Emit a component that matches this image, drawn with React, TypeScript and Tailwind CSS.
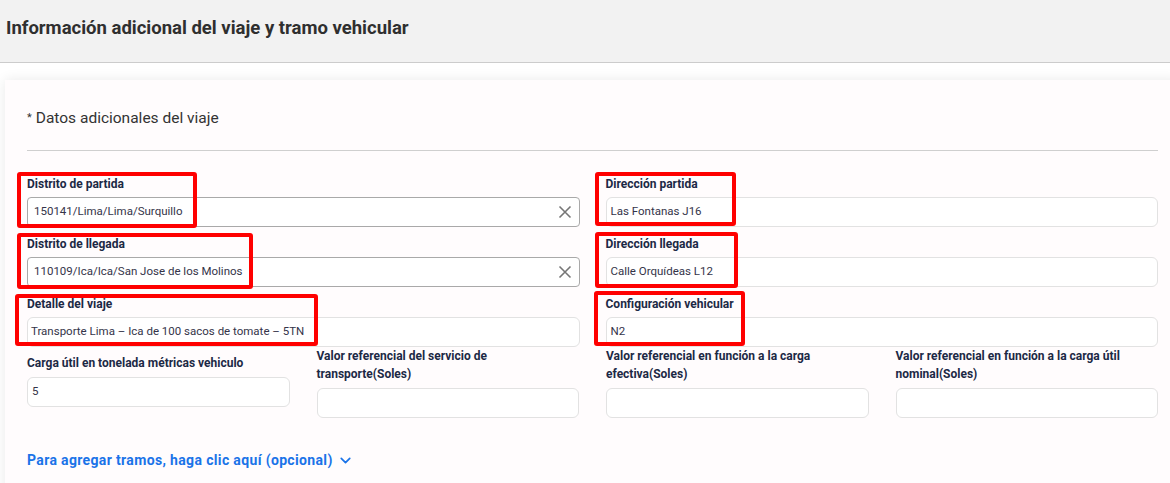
import { ChevronDown } from "lucide-react";

const ClearIcon = () => (
  <svg width="14" height="14" viewBox="0 0 14 14" className="shrink-0">
    <path d="M1.5 1.5 L12.5 12.5 M12.5 1.5 L1.5 12.5" stroke="#767676" strokeWidth="1.6" fill="none" />
  </svg>
);

const Label = ({ children, className = "" }: { children: React.ReactNode; className?: string }) => (
  <p className={`text-[12px] font-bold text-[#1c2945] leading-[16px] mb-[5px] ${className}`}>{children}</p>
);

const SelectInput = ({ value }: { value: string }) => (
  <div className="h-[30px] border border-[#a9a9a9] rounded-[4px] bg-white flex items-center justify-between pl-[6px] pr-[7px]">
    <span className="text-[11.5px] text-[#343449]">{value}</span>
    <ClearIcon />
  </div>
);

const TextInput = ({ value = "", pad = "px-[4px]" }: { value?: string; pad?: string }) => (
  <div className={`h-[30px] border border-[#e2e2e2] rounded-[6px] bg-white flex items-center ${pad}`}>
    <span className="text-[11.5px] text-[#343449]">{value}</span>
  </div>
);

// red highlight boxes drawn over the form
const marks = [
  "left-[17px] top-[172px] w-[180px] h-[56px]",
  "left-[17px] top-[233px] w-[236px] h-[56px]",
  "left-[15px] top-[294px] w-[303px] h-[52px]",
  "left-[595px] top-[172px] w-[141px] h-[54px]",
  "left-[595px] top-[232px] w-[143px] h-[56px]",
  "left-[594px] top-[291px] w-[151px] h-[55px]",
];

export default function App() {
  return (
    <div
      className="relative w-full h-[483px] overflow-hidden bg-white"
      style={{ fontFamily: "Roboto, 'Liberation Sans', sans-serif" }}
    >
      {/* Header */}
      <div className="h-[63px] bg-[#f2f2f2] border-b border-[#cccccc] pl-[6px] pt-[16px]">
        <h1 className="text-[18.5px] font-bold text-[#2f2f2f] leading-[24px]">
          Información adicional del viaje y tramo vehicular
        </h1>
      </div>

      {/* Card */}
      <div className="mt-[17px] ml-[5px] w-[1175px] bg-[#fffcfd] shadow-[0_0_12px_rgba(0,0,0,0.09)] pl-[22px] pr-[22px] pt-[28px] pb-[30px]">
        <div className="flex items-center gap-[4px] text-[15.5px] text-[#333] leading-[20px]">
          <span className="text-[11px]">*</span>
          <span>Datos adicionales del viaje</span>
        </div>
        <div className="mt-[22px] border-t border-[#cfcfcf]" />

        <div className="mt-[25px] grid grid-cols-2 gap-x-[26px] gap-y-[9px]">
          <div>
            <Label>Distrito de partida</Label>
            <SelectInput value="150141/Lima/Lima/Surquillo" />
          </div>
          <div>
            <Label>Dirección partida</Label>
            <TextInput value="Las Fontanas J16" />
          </div>
          <div>
            <Label>Distrito de llegada</Label>
            <SelectInput value="110109/Ica/Ica/San Jose de los Molinos" />
          </div>
          <div>
            <Label>Dirección llegada</Label>
            <TextInput value="Calle Orquídeas L12" />
          </div>
          <div>
            <Label>Detalle del viaje</Label>
            <TextInput value="Transporte Lima – Ica de 100 sacos de tomate – 5TN" pad="px-[3px]" />
          </div>
          <div>
            <Label>Configuración vehicular</Label>
            <TextInput value="N2" />
          </div>
        </div>

        <div className="grid grid-cols-4 gap-x-[27px] items-start">
          <div className="pt-[7px]">
            <Label className="leading-[18px]">Carga útil en tonelada métricas vehiculo</Label>
            <TextInput value="5" />
          </div>
          <div>
            <Label className="leading-[18px]">Valor referencial del servicio de transporte(Soles)</Label>
            <TextInput />
          </div>
          <div>
            <Label className="leading-[18px]">Valor referencial en función a la carga efectiva(Soles)</Label>
            <TextInput />
          </div>
          <div>
            <Label className="leading-[18px]">Valor referencial en función a la carga útil nominal(Soles)</Label>
            <TextInput />
          </div>
        </div>

        <button className="mt-[33px] flex items-center gap-[4px] text-[14px] tracking-[0.35px] font-bold text-[#1a73e8] leading-[18px]">
          Para agregar tramos, haga clic aquí (opcional)
          <ChevronDown className="w-[17px] h-[17px]" strokeWidth={2.4} />
        </button>
      </div>

      {marks.map((m) => (
        <div key={m} className={`absolute ${m} border-[4px] border-[#ff0000] rounded-[3px] pointer-events-none`} />
      ))}
    </div>
  );
}
